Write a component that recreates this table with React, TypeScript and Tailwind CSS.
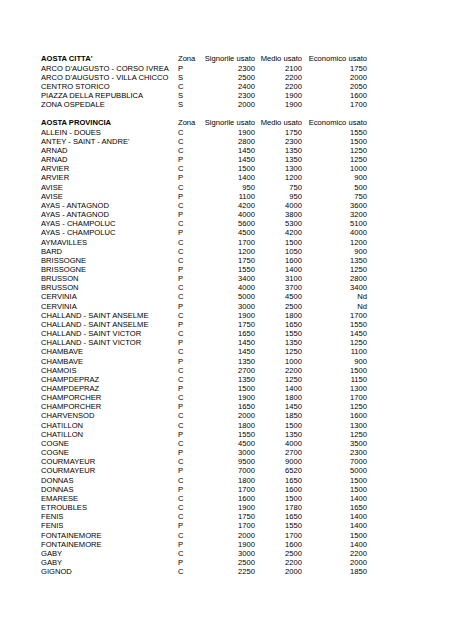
type Row = [string, string, string, string, string];

const citta: Row[] = [
  ["ARCO D'AUGUSTO - CORSO IVREA", "P", "2300", "2100", "1750"],
  ["ARCO D'AUGUSTO - VILLA CHICCO", "S", "2500", "2200", "2000"],
  ["CENTRO STORICO", "C", "2400", "2200", "2050"],
  ["PIAZZA DELLA REPUBBLICA", "S", "2300", "1900", "1600"],
  ["ZONA OSPEDALE", "S", "2000", "1900", "1700"],
];

const provincia: Row[] = [
  ["ALLEIN - DOUES", "C", "1900", "1750", "1550"],
  ["ANTEY - SAINT - ANDRE'", "C", "2800", "2300", "1500"],
  ["ARNAD", "C", "1450", "1350", "1250"],
  ["ARNAD", "P", "1450", "1350", "1250"],
  ["ARVIER", "C", "1500", "1300", "1000"],
  ["ARVIER", "P", "1400", "1200", "900"],
  ["AVISE", "C", "950", "750", "500"],
  ["AVISE", "P", "1100", "950", "750"],
  ["AYAS - ANTAGNOD", "C", "4200", "4000", "3600"],
  ["AYAS - ANTAGNOD", "P", "4000", "3800", "3200"],
  ["AYAS - CHAMPOLUC", "C", "5600", "5300", "5100"],
  ["AYAS - CHAMPOLUC", "P", "4500", "4200", "4000"],
  ["AYMAVILLES", "C", "1700", "1500", "1200"],
  ["BARD", "C", "1200", "1050", "900"],
  ["BRISSOGNE", "C", "1750", "1600", "1350"],
  ["BRISSOGNE", "P", "1550", "1400", "1250"],
  ["BRUSSON", "P", "3400", "3100", "2800"],
  ["BRUSSON", "C", "4000", "3700", "3400"],
  ["CERVINIA", "C", "5000", "4500", "Nd"],
  ["CERVINIA", "P", "3000", "2500", "Nd"],
  ["CHALLAND - SAINT ANSELME", "C", "1900", "1800", "1700"],
  ["CHALLAND - SAINT ANSELME", "P", "1750", "1650", "1550"],
  ["CHALLAND - SAINT VICTOR", "C", "1650", "1550", "1450"],
  ["CHALLAND - SAINT VICTOR", "P", "1450", "1350", "1250"],
  ["CHAMBAVE", "C", "1450", "1250", "1100"],
  ["CHAMBAVE", "P", "1350", "1000", "900"],
  ["CHAMOIS", "C", "2700", "2200", "1500"],
  ["CHAMPDEPRAZ", "C", "1350", "1250", "1150"],
  ["CHAMPDEPRAZ", "P", "1500", "1400", "1300"],
  ["CHAMPORCHER", "C", "1900", "1800", "1700"],
  ["CHAMPORCHER", "P", "1650", "1450", "1250"],
  ["CHARVENSOD", "C", "2000", "1850", "1600"],
  ["CHATILLON", "C", "1800", "1500", "1300"],
  ["CHATILLON", "P", "1550", "1350", "1250"],
  ["COGNE", "C", "4500", "4000", "3500"],
  ["COGNE", "P", "3000", "2700", "2300"],
  ["COURMAYEUR", "C", "9500", "9000", "7000"],
  ["COURMAYEUR", "P", "7000", "6520", "5000"],
  ["DONNAS", "C", "1800", "1650", "1500"],
  ["DONNAS", "P", "1700", "1600", "1500"],
  ["EMARESE", "C", "1600", "1500", "1400"],
  ["ETROUBLES", "C", "1900", "1780", "1650"],
  ["FENIS", "C", "1750", "1650", "1400"],
  ["FENIS", "P", "1700", "1550", "1400"],
  ["FONTAINEMORE", "C", "2000", "1700", "1500"],
  ["FONTAINEMORE", "P", "1900", "1600", "1400"],
  ["GABY", "C", "3000", "2500", "2200"],
  ["GABY", "P", "2500", "2200", "2000"],
  ["GIGNOD", "C", "2250", "2000", "1850"],
];

const cols = "grid grid-cols-[137px_24px_53px_47px_65px] h-[9.17px] items-center";

/** intestazione di sezione */
const Header = ({ title }: { title: string }) => (
  <div className={cols}>
    <span className="font-bold">{title}</span>
    <span>Zona</span>
    <span className="text-right whitespace-nowrap">Signorile usato</span>
    <span className="text-right whitespace-nowrap">Medio usato</span>
    <span className="text-right whitespace-nowrap">Economico usato</span>
  </div>
);

const Line = ({ row }: { row: Row }) => (
  <div className={cols}>
    <span className="whitespace-nowrap">{row[0]}</span>
    <span>{row[1]}</span>
    <span className="text-right">{row[2]}</span>
    <span className="text-right">{row[3]}</span>
    <span className="text-right">{row[4]}</span>
  </div>
);

export default function App() {
  return (
    <div className="w-[452px] h-[640px] bg-white text-black pl-[41px] pt-[54.4px] text-[7.6px] leading-[9.17px] font-['Liberation_Sans',Arial,sans-serif]">
      <Header title="AOSTA CITTA'" />
      {citta.map((r, i) => (
        <Line key={`c-${i}`} row={r} />
      ))}
      <div className="h-[9.17px]" />
      <Header title="AOSTA PROVINCIA" />
      {provincia.map((r, i) => (
        <Line key={`p-${i}`} row={r} />
      ))}
    </div>
  );
}
